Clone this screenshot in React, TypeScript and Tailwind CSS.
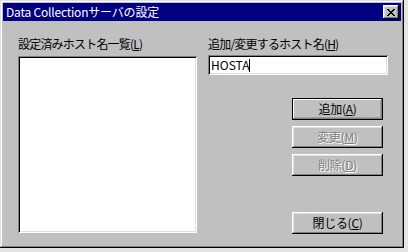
import React from "react";

const font = { fontFamily: '"Noto Sans CJK JP", "Liberation Sans", sans-serif' };

function Btn({ label, k, disabled, def }: { label: string; k: string; disabled?: boolean; def?: boolean }) {
  const inner = (
    <div
      className={
        "h-full w-full flex items-center justify-center bg-[#c0c0c0] text-[12px] leading-none " +
        (def
          ? "shadow-[inset_-1px_-1px_#808080,inset_1px_1px_#fff,inset_-2px_-2px_#a0a0a0]"
          : "shadow-[inset_-1px_-1px_#000,inset_1px_1px_#fff,inset_-2px_-2px_#808080,inset_2px_2px_#dfdfdf]") +
        (disabled ? " text-[#808080] [text-shadow:1px_1px_0_#fff]" : " text-black")
      }
    >
      <span className="tracking-[-0.3px]">
        {label}(<span className="underline underline-offset-1">{k}</span>)
      </span>
    </div>
  );
  return (
    <div className={"w-[91px] h-[22px] " + (def ? "border border-black" : "")}>{inner}</div>
  );
}

export default function App() {
  return (
    <div className="w-[408px] h-[252px] bg-[#e4e4e4]" style={font}>
      <div className="w-[404px] h-[248px] bg-[#c0c0c0] p-[3px] flex flex-col shadow-[inset_-1px_-1px_#000,inset_1px_1px_#dfdfdf,inset_-2px_-2px_#808080,inset_2px_2px_#fff]">
        <div className="h-[18px] bg-[#000080] flex items-center justify-between pl-[3px] pr-[2px]">
          <span className="text-white text-[12px] leading-none tracking-[-0.2px]">Data Collectionサーバの設定</span>
          <div className="w-[16px] h-[14px] bg-[#c0c0c0] flex items-center justify-center shadow-[inset_-1px_-1px_#000,inset_1px_1px_#fff,inset_-2px_-2px_#808080,inset_2px_2px_#dfdfdf]">
            <svg width="8" height="7" viewBox="0 0 8 7">
              <path d="M0 0h2v1h1v1h2V1h1V0h2v1H7v1H6v1H5v1h1v1h1v1h1v1H6V6H5V5H3v1H2v1H0V6h1V5h1V4h1V3H2V2H1V1H0z" fill="#000" />
            </svg>
          </div>
        </div>
        <div className="flex flex-row pl-[15px] pt-[13px]">
          <div className="w-[179px] flex flex-col">
            <div className="h-[22px] text-[12px] leading-[20px] text-black tracking-[-0.8px]">
              設定済みホスト名一覧(<span className="underline underline-offset-1">L</span>)
            </div>
            <div className="h-[177px] bg-white shadow-[inset_1px_1px_#808080,inset_-1px_-1px_#fff,inset_2px_2px_#000,inset_-2px_-2px_#dfdfdf]" />
          </div>
          <div className="ml-[11px] w-[180px] flex flex-col">
            <div className="h-[21px] text-[12px] leading-[20px] text-black tracking-[-0.8px]">
              追加/変更するホスト名(<span className="underline underline-offset-1">H</span>)
            </div>
            <div className="h-[20px] bg-white flex items-center pl-[3px] shadow-[inset_1px_1px_#808080,inset_-1px_-1px_#fff,inset_2px_2px_#000,inset_-2px_-2px_#dfdfdf]">
              <span className="text-[12px] leading-none text-black">HOSTA</span>
              <span className="w-px h-[13px] bg-black" />
            </div>
            <div className="pl-[84px] mt-[23px] flex flex-col gap-[6px]">
              <Btn label="追加" k="A" def />
              <Btn label="変更" k="M" disabled />
              <Btn label="削除" k="D" disabled />
              <div className="mt-[30px]">
                <Btn label="閉じる" k="C" />
              </div>
            </div>
          </div>
        </div>
      </div>
    </div>
  );
}
